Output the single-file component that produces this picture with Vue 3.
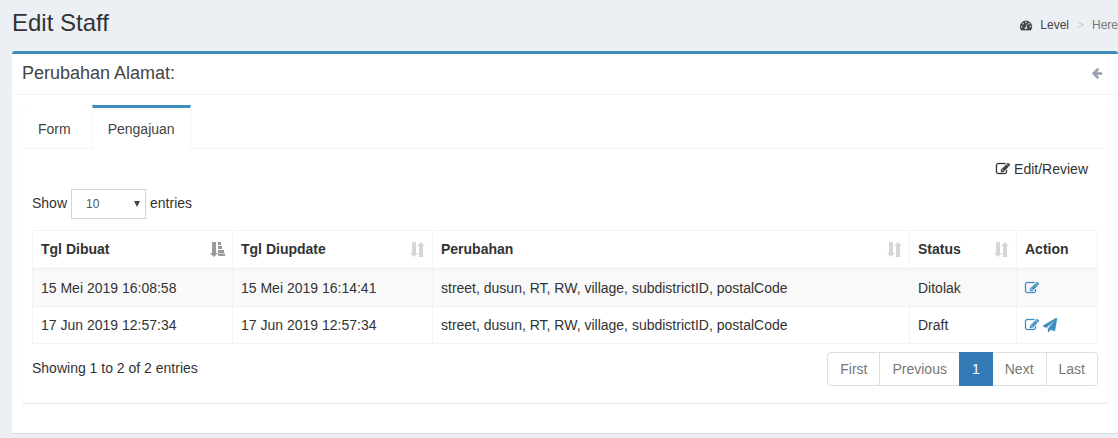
<script setup>
import { ref } from 'vue'

const paths = {
  gauge: 'M384 1152q0-53-37.5-90.5t-90.5-37.5-90.5 37.5-37.5 90.5 37.5 90.5 90.5 37.5 90.5-37.5 37.5-90.5zm192-448q0-53-37.5-90.5t-90.5-37.5-90.5 37.5-37.5 90.5 37.5 90.5 90.5 37.5 90.5-37.5 37.5-90.5zm428 481l101-382q6-26-7.5-48.5t-38.5-29.5-48 6.5-30 39.5l-101 382q-60 5-107 43.5t-63 98.5q-20 77 20 146t117 89 146-20 89-117q16-60-6-117t-72-91zm660-33q0-53-37.5-90.5t-90.5-37.5-90.5 37.5-37.5 90.5 37.5 90.5 90.5 37.5 90.5-37.5 37.5-90.5zm-640-640q0-53-37.5-90.5t-90.5-37.5-90.5 37.5-37.5 90.5 37.5 90.5 90.5 37.5 90.5-37.5 37.5-90.5zm448 192q0-53-37.5-90.5t-90.5-37.5-90.5 37.5-37.5 90.5 37.5 90.5 90.5 37.5 90.5-37.5 37.5-90.5zm320 448q0 261-141 483-19 29-54 29h-1402q-35 0-54-29-141-221-141-483 0-182 71-348t191-286 286-191 348-71 348 71 286 191 191 286 71 348z',
  edit: 'M888 1184l116-116-152-152-116 116v56h96v96h56zm440-720q-16-16-33 1l-350 350q-17 17-1 33t33-1l350-350q17-17 1-33zm80 594v190q0 119-84.5 203.5t-203.5 84.5h-832q-119 0-203.5-84.5t-84.5-203.5v-832q0-119 84.5-203.5t203.5-84.5h832q63 0 117 25 15 7 18 23 3 17-9 29l-49 49q-14 14-32 8-23-6-45-6h-832q-66 0-113 47t-47 113v832q0 66 47 113t113 47h832q66 0 113-47t47-113v-126q0-13 9-22l64-64q15-15 35-7t20 29zm-96-738l288 288-672 672h-288v-288zm444 132l-92 92-288-288 92-92q28-28 68-28t68 28l152 152q28 28 28 68t-28 68z',
  send: 'M1764 11q33 24 27 64l-256 1536q-5 29-32 45-14 8-31 8-11 0-24-5l-453-185-242 295q-18 23-49 23-13 0-22-4-19-7-30.5-23.5t-11.5-36.5v-349l864-1059-1069 925-395-162q-37-14-40-55-2-40 32-59l1664-960q15-9 32-9 20 0 36 11z',
  back: 'M1664 896v128q0 53-32.5 90.5t-84.5 37.5h-704l293 294q38 36 38 90t-38 90l-75 76q-37 37-90 37-52 0-91-37l-651-652q-37-37-37-90 0-52 37-91l651-650q38-38 91-38 52 0 90 38l75 74q38 38 38 91t-38 91l-293 293h704q52 0 84.5 37.5t32.5 90.5z',
}

const pageSize = ref('10')
const columns = [
  { title: 'Tgl Dibuat', sort: 'asc', cls: 'col-date' },
  { title: 'Tgl Diupdate', sort: 'both', cls: 'col-date' },
  { title: 'Perubahan', sort: 'both', cls: 'col-change' },
  { title: 'Status', sort: 'both', cls: 'col-status' },
  { title: 'Action', sort: '', cls: 'col-action' },
]
const fields = 'street, dusun, RT, RW, village, subdistrictID, postalCode'
const rows = [
  { created: '15 Mei 2019 16:08:58', updated: '15 Mei 2019 16:14:41', status: 'Ditolak', draft: false },
  { created: '17 Jun 2019 12:57:34', updated: '17 Jun 2019 12:57:34', status: 'Draft', draft: true },
]
const pages = ['First', 'Previous', '1', 'Next', 'Last']
</script>

<template>
  <main class="page">
    <header class="page-head">
      <h1>Edit Staff</h1>
      <nav class="crumbs" aria-label="Breadcrumb">
        <a href="#"><svg class="icon-sm" viewBox="0 0 1792 1792" aria-hidden="true"><path :d="paths.gauge" /></svg>Level</a>
        <span class="sep">&gt;</span>
        <span class="here">Here</span>
      </nav>
    </header>

    <section class="box">
      <div class="box-head">
        <h2>Perubahan Alamat:</h2>
        <button class="back" type="button" aria-label="Back">
          <svg class="icon-sm" viewBox="0 0 1792 1792" aria-hidden="true"><path :d="paths.back" /></svg>
        </button>
      </div>

      <div class="tabs-card">
        <nav class="tabs">
          <a href="#" class="tab">Form</a>
          <a href="#" class="tab active">Pengajuan</a>
        </nav>

        <div class="pane">
          <div class="tools">
            <button type="button" class="review">
              <svg class="icon" viewBox="0 0 1792 1792" aria-hidden="true"><path :d="paths.edit" /></svg>Edit/Review
            </button>
          </div>

          <div class="length">
            <label for="page-size">Show</label>
            <span class="select-wrap">
              <select id="page-size" v-model="pageSize">
                <option>10</option>
                <option>25</option>
                <option>50</option>
                <option>100</option>
              </select>
            </span>
            <label for="page-size">entries</label>
          </div>

          <table>
            <thead>
              <tr>
                <th v-for="c in columns" :key="c.title" :class="c.cls" scope="col">
                  <div class="th-in">
                    {{ c.title }}
                    <svg v-if="c.sort === 'asc'" class="sort asc" viewBox="0 0 15 15" aria-hidden="true">
                      <path d="M2 0h4v11h2L4 15 0 11h2zM8 0h3v3H8zM8 4h4v3H8zM8 8h6v3H8zM8 11.500h7V14H8z" />
                    </svg>
                    <svg v-else-if="c.sort" class="sort" viewBox="0 0 15 15" aria-hidden="true">
                      <path d="M2 0h4v11h2L4 15 0 11h2zM11 0l4 4h-2v11H9V4H7z" />
                    </svg>
                  </div>
                </th>
              </tr>
            </thead>
            <tbody>
              <tr v-for="r in rows" :key="r.created">
                <td>{{ r.created }}</td>
                <td>{{ r.updated }}</td>
                <td>{{ fields }}</td>
                <td>{{ r.status }}</td>
                <td>
                  <div class="actions">
                    <a href="#" aria-label="Edit"><svg class="icon" viewBox="0 0 1792 1792" aria-hidden="true"><path :d="paths.edit" /></svg></a>
                    <a v-if="r.draft" href="#" aria-label="Send"><svg class="icon" viewBox="0 0 1792 1792" aria-hidden="true"><path :d="paths.send" /></svg></a>
                  </div>
                </td>
              </tr>
            </tbody>
          </table>

          <div class="foot">
            <p>Showing 1 to 2 of 2 entries</p>
            <nav class="pager" aria-label="Pagination">
              <a v-for="p in pages" :key="p" href="#" :class="{ current: p === '1' }">{{ p }}</a>
            </nav>
          </div>
        </div>
      </div>
    </section>
  </main>
</template>

<style>
body {
  background: #ecf0f5;
}
</style>

<style scoped>
* {
  box-sizing: border-box;
}
.page {
  padding: 8px 0 4px 12px;
  font: 14px/20px "Liberation Sans", Arial, sans-serif;
  color: #333;
}
a {
  color: inherit;
  text-decoration: none;
}
button {
  font: inherit;
  color: inherit;
  background: none;
  border: 0;
  padding: 0;
  cursor: pointer;
}
svg {
  display: block;
  fill: currentColor;
  stroke: currentColor;
  stroke-width: 40px;
  overflow: visible;
}
.icon {
  width: 14px;
  height: 14px;
}
.icon-sm {
  width: 12px;
  height: 12px;
}
.page-head {
  display: flex;
  justify-content: space-between;
  align-items: flex-start;
  height: 43px;
}
h1 {
  margin: 0;
  font-size: 24px;
  line-height: 30px;
  font-weight: 400;
}
.crumbs {
  display: flex;
  align-items: center;
  gap: 8px;
  padding-top: 7px;
  font-size: 12px;
}
.crumbs a {
  display: flex;
  align-items: center;
  gap: 8px;
  color: #444;
}
.sep {
  color: #ccc;
}
.here {
  color: #777;
}
.box {
  background: #fff;
  border-top: 3px solid #3c8dbc;
  border-radius: 3px;
  box-shadow: 0 1px 1px rgba(0, 0, 0, 0.1);
  padding-bottom: 30px;
}
.box-head {
  display: flex;
  justify-content: space-between;
  align-items: center;
  padding: 9px 15px 11px 10px;
  border-bottom: 1px solid #f4f4f4;
  color: #444;
}
h2 {
  margin: 0;
  font-size: 18px;
  line-height: 20px;
  font-weight: 400;
}
.back {
  color: #97a0b3;
}
.tabs-card {
  margin: 10px 10px 0;
  border-radius: 3px;
  box-shadow: 0 1px 1px rgba(0, 0, 0, 0.1), 0 0 1px rgba(0, 0, 0, 0.06);
}
.tabs {
  display: flex;
  gap: 5px;
  border-bottom: 1px solid #f4f4f4;
}
.tab {
  padding: 11px 15px 9px;
  margin-bottom: -1px;
  border: 1px solid transparent;
  border-width: 3px 1px 1px;
  color: #444;
}
.tab.active {
  background: linear-gradient(#3c8dbc, #3c8dbc) border-box top / 100% 3px no-repeat, #fff;
  border-left-color: #f4f4f4;
  border-right-color: #f4f4f4;
  border-top-color: #3c8dbc;
}
.pane {
  padding: 10px 10px 17px;
}
.tools {
  display: flex;
  justify-content: flex-end;
  padding-right: 10px;
}
.review {
  display: flex;
  align-items: center;
  gap: 4px;
}
.length {
  display: flex;
  align-items: flex-start;
  gap: 4px;
  margin: 10px 0 11px;
}
.length label {
  padding-top: 4px;
}
.select-wrap {
  position: relative;
}
.select-wrap::after {
  content: "";
  position: absolute;
  right: 6px;
  top: 12px;
  border: 3px solid transparent;
  border-top: 6px solid #444;
  border-bottom: 0;
  pointer-events: none;
}
select {
  display: block;
  appearance: none;
  width: 75px;
  height: 30px;
  padding: 5px 14px;
  border: 1px solid #d2d6de;
  border-radius: 0;
  background: #fff;
  font: 12px/18px "Liberation Sans", Arial, sans-serif;
  color: #555;
}
table {
  width: 100%;
  table-layout: fixed;
  border-collapse: separate;
  border-spacing: 0;
  border: 1px solid #f4f4f4;
  border-width: 1px 0 1px 1px;
}
th,
td {
  padding: 8px;
  text-align: left;
  border-right: 1px solid #f4f4f4;
}
th {
  border-bottom: 2px solid #f4f4f4;
}
td {
  border-top: 1px solid #f4f4f4;
}
tbody tr:nth-child(odd) {
  background: #f9f9f9;
}
.col-date {
  width: 200px;
}
.col-status {
  width: 107px;
}
.col-action {
  width: 81px;
}
.th-in {
  display: flex;
  align-items: center;
  justify-content: space-between;
}
.sort {
  width: 15px;
  height: 15px;
  margin-right: -1px;
  stroke: none;
  color: #d6d6d6;
}
.sort.asc {
  color: #999;
}
.actions {
  display: flex;
  gap: 4px;
  color: #3c8dbc;
}
.foot {
  display: flex;
  justify-content: space-between;
  align-items: flex-start;
  margin-top: 8px;
}
.foot p {
  margin: 0;
  padding-top: 6px;
}
.pager {
  display: flex;
}
.pager a {
  padding: 6px 12px;
  border: 1px solid #ddd;
  color: #777;
}
.pager a + a {
  margin-left: -1px;
}
.pager a:first-child {
  border-radius: 4px 0 0 4px;
}
.pager a:last-child {
  border-radius: 0 4px 4px 0;
}
.pager .current {
  background: #337ab7;
  border-color: #337ab7;
  color: #fff;
  z-index: 1;
}
</style>
